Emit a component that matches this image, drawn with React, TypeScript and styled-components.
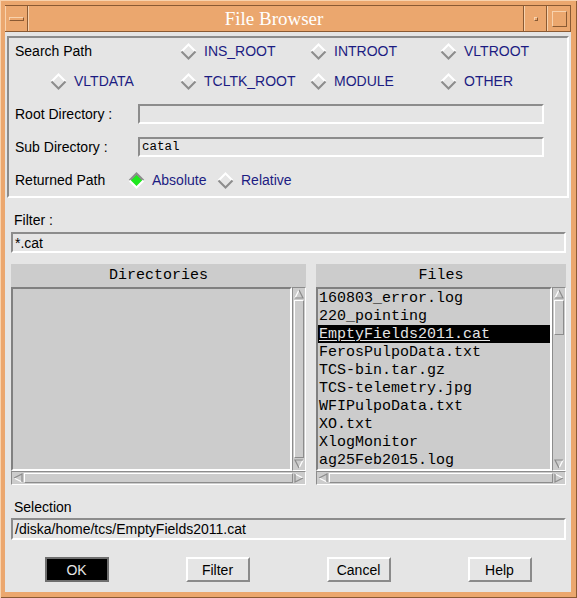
import styled, { createGlobalStyle } from 'styled-components';

const GlobalStyle = createGlobalStyle`
  body {
    margin: 0;
    background: #eba76e;
    font-family: 'Liberation Sans', Arial, sans-serif;
  }
`;

const SANS = `'Liberation Sans', Arial, sans-serif`;
const MONO = `'Liberation Mono', 'DejaVu Sans Mono', monospace`;

const Window = styled.div`
  width: 577px;
  height: 598px;
  box-sizing: border-box;
  padding: 5px 6px 6px 5px;
  background: #eba76e;
  display: flex;
  flex-direction: column;
  box-shadow: inset 1px 1px 0 #f8d2ad, inset -1px -1px 0 #8a5a33;
`;

const TitleBar = styled.div`
  height: 27px;
  box-sizing: border-box;
  display: flex;
  border-top: 1px solid #8a5a33;
  border-bottom: 1px solid #8a5a33;
`;

const TitleCell = styled.div<{ $w?: number }>`
  ${(p) => (p.$w ? `width: ${p.$w}px;` : 'flex: 1;')}
  display: flex;
  align-items: center;
  justify-content: center;
  box-sizing: border-box;
  border-left: 1px solid #f8d2ad;
  border-right: 1px solid #8a5a33;
`;

const Title = styled.span`
  font-family: 'Liberation Serif', 'Times New Roman', serif;
  font-size: 19px;
  color: #ffffff;
  padding-right: 4px;
`;

const Bevel = styled.div<{ $w: number; $h: number }>`
  width: ${(p) => p.$w}px;
  height: ${(p) => p.$h}px;
  box-sizing: border-box;
  border: 1px solid;
  border-color: #f8d2ad #8a5a33 #8a5a33 #f8d2ad;
`;

const Content = styled.div`
  flex: 1;
  background: #e5e5e5;
  display: flex;
  flex-direction: column;
`;

const Group = styled.div`
  margin: 4px 2px 0 2px;
  height: 162px;
  box-sizing: border-box;
  border: 2px solid;
  border-color: #8c8c8c #ffffff #ffffff #8c8c8c;
  display: flex;
  flex-direction: column;
`;

const SearchGrid = styled.div`
  display: grid;
  grid-template-columns: 41px repeat(4, 130px);
  grid-template-rows: 26px 34px;
  align-items: center;
`;

const Label = styled.span<{ $w?: number }>`
  font-family: ${SANS};
  font-size: 14px;
  color: #000;
  white-space: nowrap;
  ${(p) => (p.$w ? `width: ${p.$w}px; flex: none;` : '')}
`;

const SearchLabel = styled(Label)`
  grid-column: 1 / 3;
  padding-left: 6px;
`;

const Row = styled.div<{ $h: number }>`
  height: ${(p) => p.$h}px;
  display: flex;
  align-items: center;
  padding-left: 6px;
`;

const RadioWrap = styled.div<{ $col?: number; $w?: number }>`
  display: flex;
  align-items: center;
  gap: 7px;
  ${(p) => (p.$col ? `grid-column: ${p.$col};` : '')}
  ${(p) => (p.$w ? `width: ${p.$w}px;` : '')}
`;

const RadioText = styled.span`
  font-family: ${SANS};
  font-size: 14px;
  color: #1c1c82;
  white-space: nowrap;
`;

const Entry = styled.div<{ $w?: number; $h: number }>`
  ${(p) => (p.$w ? `width: ${p.$w}px;` : '')}
  height: ${(p) => p.$h}px;
  box-sizing: border-box;
  border: 2px solid;
  border-color: #8c8c8c #ffffff #ffffff #8c8c8c;
  background: #e5e5e5;
  display: flex;
  align-items: center;
  padding-left: 2px;
  overflow: hidden;
`;

const EntryText = styled.span<{ $mono?: boolean }>`
  font-family: ${(p) => (p.$mono ? `'Liberation Mono', monospace` : SANS)};
  font-size: ${(p) => (p.$mono ? '12.5px' : '14px')};
  color: #000;
  white-space: nowrap;
`;

const FieldLabel = styled.div<{ $top: number }>`
  margin: ${(p) => p.$top}px 0 0 9px;
  height: 20px;
  display: flex;
  align-items: center;
`;

const WideEntry = styled(Entry)<{ $top: number }>`
  margin: ${(p) => p.$top}px 5px 0 6px;
`;

const Lists = styled.div`
  margin: 11px 5px 0 6px;
  display: grid;
  grid-template-columns: 295px 250px;
  column-gap: 10px;
`;

const Panel = styled.div`
  display: flex;
  flex-direction: column;
`;

const PanelHeader = styled.div`
  height: 23px;
  background: #cccccc;
  display: flex;
  align-items: center;
  justify-content: center;
  font-family: ${MONO};
  font-size: 15px;
  color: #000;
`;

const PanelBody = styled.div`
  height: 198px;
  display: grid;
  grid-template-columns: 1fr 14px;
  grid-template-rows: 184px 14px;
`;

const ListBox = styled.div`
  box-sizing: border-box;
  border: 2px solid;
  border-color: #808080 #ffffff #ffffff #808080;
  background: #cccccc;
  overflow: hidden;
`;

const Item = styled.div<{ $sel?: boolean }>`
  height: 18px;
  line-height: 19px;
  padding-left: 1px;
  font-family: ${MONO};
  font-size: 15px;
  white-space: nowrap;
  color: ${(p) => (p.$sel ? '#e5e5e5' : '#000')};
  background: ${(p) => (p.$sel ? '#000' : 'transparent')};
  text-decoration: ${(p) => (p.$sel ? 'underline' : 'none')};
  text-underline-offset: 2px;
`;

const Scroll = styled.div<{ $dir: 'v' | 'h' }>`
  box-sizing: border-box;
  background: #cccccc;
  border: 1px solid;
  border-color: #8c8c8c #ffffff #ffffff #8c8c8c;
  display: flex;
  flex-direction: ${(p) => (p.$dir === 'v' ? 'column' : 'row')};
  align-items: center;
  padding: 1px;
  ${(p) => (p.$dir === 'h' ? 'grid-column: 1 / 3;' : '')}
`;

const Thumb = styled.div<{ $dir: 'v' | 'h'; $len?: number }>`
  box-sizing: border-box;
  border: 1px solid;
  border-color: #ffffff #8c8c8c #8c8c8c #ffffff;
  background: #cccccc;
  ${(p) =>
    p.$dir === 'v'
      ? `width: 10px; ${p.$len ? `height: ${p.$len}px;` : 'flex: 1;'} margin: 1px 0;`
      : `height: 10px; ${p.$len ? `width: ${p.$len}px;` : 'flex: 1;'} margin: 0 1px;`}
`;

const Spacer = styled.div`
  flex: 1;
`;

const Buttons = styled.div`
  margin-top: 17px;
  padding-left: 1px;
  display: grid;
  grid-template-columns: repeat(4, 141px);
  justify-items: center;
`;

const Button = styled.div<{ $default?: boolean }>`
  width: 64px;
  height: 25px;
  box-sizing: border-box;
  border: 2px solid;
  border-color: ${(p) => (p.$default ? '#6e6e6e' : '#ffffff #8a8a8a #8a8a8a #ffffff')};
  background: ${(p) => (p.$default ? '#000' : '#e5e5e5')};
  color: ${(p) => (p.$default ? '#e5e5e5' : '#000')};
  font-family: ${SANS};
  font-size: 14px;
  display: flex;
  align-items: center;
  justify-content: center;
`;

const Diamond = ({ on }: { on?: boolean }) => (
  <svg width="17" height="17" viewBox="0 0 17 17">
    <polygon points="8.5,2 15,8.5 8.5,15 2,8.5" fill={on ? '#1ee81e' : '#e5e5e5'} />
    <polyline points="1.5,8.5 8.5,1.5 15.5,8.5" fill="none" stroke={on ? '#8c8c8c' : '#ffffff'} strokeWidth="2" />
    <polyline points="1.5,8.5 8.5,15.5 15.5,8.5" fill="none" stroke={on ? '#ffffff' : '#8c8c8c'} strokeWidth="2" />
  </svg>
);

const Arrow = ({ dir }: { dir: 'up' | 'down' | 'left' | 'right' }) => {
  const rot = { up: 0, right: 90, down: 180, left: 270 }[dir];
  return (
    <svg width="10" height="10" viewBox="0 0 10 10" style={{ transform: `rotate(${rot}deg)`, flex: 'none' }}>
      <polygon points="5,1 9,9 1,9" fill="#cccccc" />
      <polyline points="1,9 5,1" fill="none" stroke="#ffffff" strokeWidth="1.2" />
      <polyline points="5,1 9,9 1,9" fill="none" stroke="#8c8c8c" strokeWidth="1.2" />
    </svg>
  );
};

const Radio = ({ label, on, col, w }: { label: string; on?: boolean; col?: number; w?: number }) => (
  <RadioWrap $col={col} $w={w}>
    <Diamond on={on} />
    <RadioText>{label}</RadioText>
  </RadioWrap>
);

const files = [
  '160803_error.log',
  '220_pointing',
  'EmptyFields2011.cat',
  'FerosPulpoData.txt',
  'TCS-bin.tar.gz',
  'TCS-telemetry.jpg',
  'WFIPulpoData.txt',
  'XO.txt',
  'XlogMonitor',
  'ag25Feb2015.log',
];

const ListPanel = ({ title, items, thumb }: { title: string; items: string[]; thumb?: number }) => (
  <Panel>
    <PanelHeader>{title}</PanelHeader>
    <PanelBody>
      <ListBox>
        {items.map((f) => (
          <Item key={f} $sel={f === 'EmptyFields2011.cat'}>
            {f}
          </Item>
        ))}
      </ListBox>
      <Scroll $dir="v">
        <Arrow dir="up" />
        <Thumb $dir="v" $len={thumb} />
        {thumb ? <Spacer /> : null}
        <Arrow dir="down" />
      </Scroll>
      <Scroll $dir="h">
        <Arrow dir="left" />
        <Thumb $dir="h" />
        <Arrow dir="right" />
      </Scroll>
    </PanelBody>
  </Panel>
);

export default function App() {
  return (
    <>
      <GlobalStyle />
      <Window>
        <TitleBar>
          <TitleCell $w={23}>
            <Bevel $w={15} $h={4} />
          </TitleCell>
          <TitleCell>
            <Title>File Browser</Title>
          </TitleCell>
          <TitleCell $w={23}>
            <Bevel $w={4} $h={4} />
          </TitleCell>
          <TitleCell $w={24}>
            <Bevel $w={15} $h={16} />
          </TitleCell>
        </TitleBar>
        <Content>
          <Group>
            <SearchGrid>
              <SearchLabel>Search Path</SearchLabel>
              <Radio label="INS_ROOT" col={3} />
              <Radio label="INTROOT" col={4} />
              <Radio label="VLTROOT" col={5} />
              <Radio label="VLTDATA" col={2} />
              <Radio label="TCLTK_ROOT" col={3} />
              <Radio label="MODULE" col={4} />
              <Radio label="OTHER" col={5} />
            </SearchGrid>
            <Row $h={32}>
              <Label $w={123}>Root Directory :</Label>
              <Entry $w={406} $h={20} />
            </Row>
            <Row $h={34}>
              <Label $w={123}>Sub Directory :</Label>
              <Entry $w={406} $h={20}>
                <EntryText $mono>catal</EntryText>
              </Entry>
            </Row>
            <Row $h={32}>
              <Label $w={113}>Returned Path</Label>
              <Radio label="Absolute" on w={89} />
              <Radio label="Relative" />
            </Row>
          </Group>
          <FieldLabel $top={12}>
            <Label>Filter :</Label>
          </FieldLabel>
          <WideEntry $top={2} $h={21}>
            <EntryText>*.cat</EntryText>
          </WideEntry>
          <Lists>
            <ListPanel title="Directories" items={[]} />
            <ListPanel title="Files" items={files} thumb={35} />
          </Lists>
          <FieldLabel $top={12}>
            <Label>Selection</Label>
          </FieldLabel>
          <WideEntry $top={1} $h={22}>
            <EntryText>/diska/home/tcs/EmptyFields2011.cat</EntryText>
          </WideEntry>
          <Buttons>
            <Button $default>OK</Button>
            <Button>Filter</Button>
            <Button>Cancel</Button>
            <Button>Help</Button>
          </Buttons>
        </Content>
      </Window>
    </>
  );
}
